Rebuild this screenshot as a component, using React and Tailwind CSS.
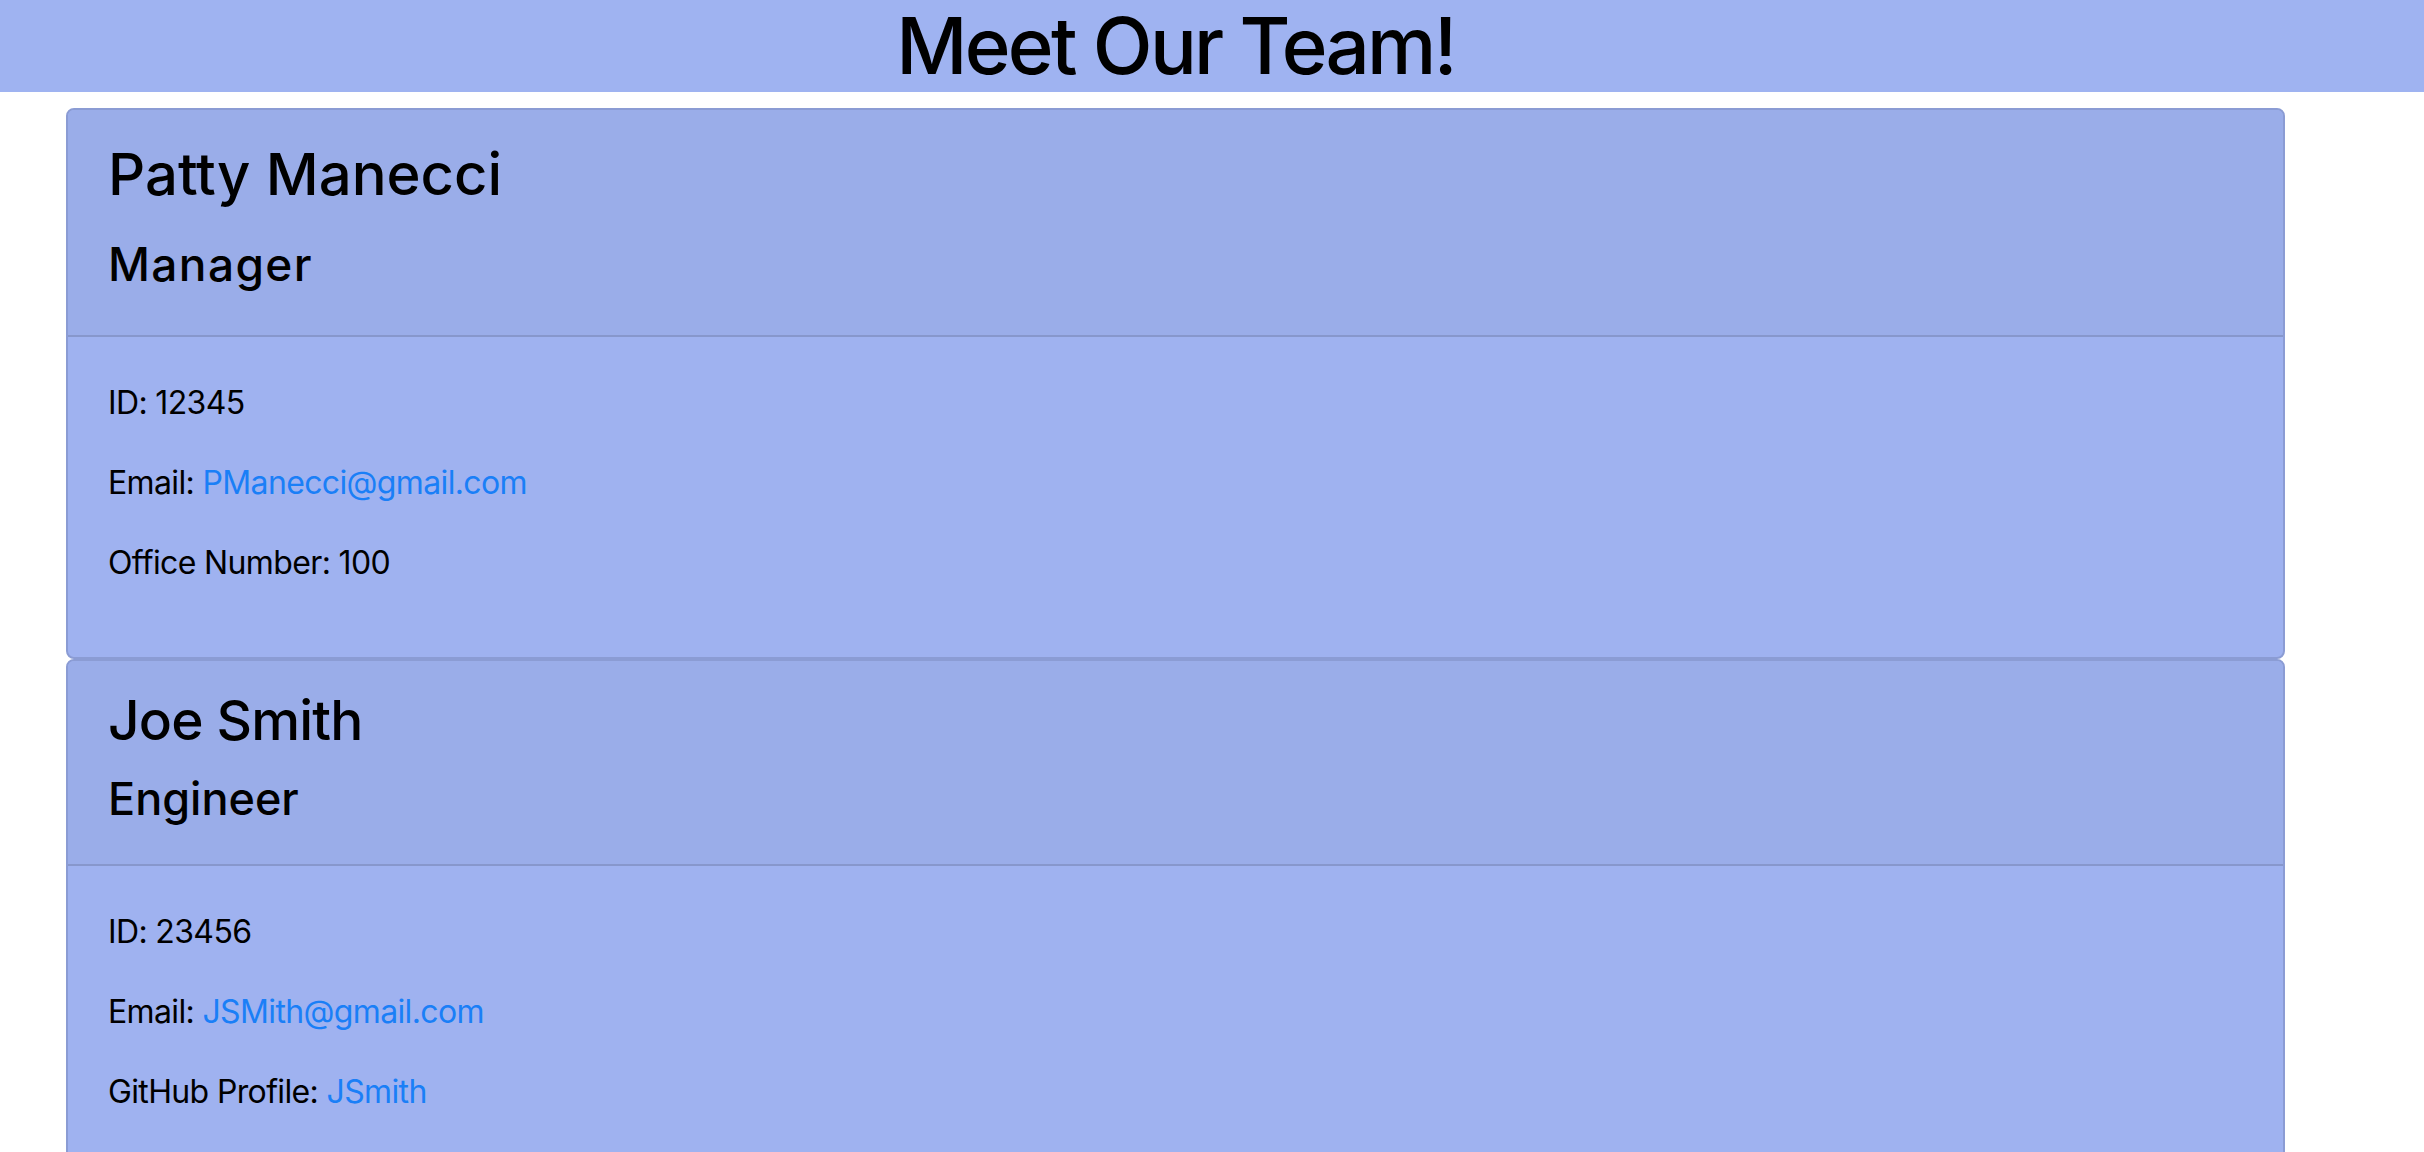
import React from 'react';

const team = [
  {
    id: 1,
    name: "Patty Manecci",
    role: "Manager",
    empId: "12345",
    email: "PManecci@gmail.com",
    extraLabel: "Office Number:",
    extraValue: "100",
    extraIsLink: false,
    headerClass: "pt-[35px] pb-[48px]",
    nameClass: "text-[58px] leading-[58px]",
    roleClass: "mt-[38px] text-[46px] leading-[46px] tracking-[0.03em]",
  },
  {
    id: 2,
    name: "Joe Smith",
    role: "Engineer",
    empId: "23456",
    email: "JSMith@gmail.com",
    extraLabel: "GitHub Profile:",
    extraValue: "JSmith",
    extraIsLink: true,
    headerClass: "pt-[31px] pb-[43px]",
    nameClass: "text-[55px] leading-[56px] tracking-[-0.015em]",
    roleClass: "mt-[28px] text-[45px] leading-[45px]",
  },
];

const TeamCard = ({ member }) => {
  return (
    <div className="bg-[#9fb2f0] border-2 border-[#8b9cd4] rounded-[8px] overflow-hidden">
      <div className={`bg-[#9aade9] border-b-2 border-[#8797cc] px-[40px] ${member.headerClass}`}>
        <h2 className={`${member.nameClass} font-medium text-black`}>{member.name}</h2>
        <h3 className={`${member.roleClass} font-medium text-black`}>{member.role}</h3>
      </div>
      <div className="px-[40px] pt-[49px] pb-[78px] flex flex-col gap-[47px] text-[32px] leading-[33px] tracking-[-0.02em] text-black">
        <p>ID: {member.empId}</p>
        <p>
          Email: <a href={`mailto:${member.email}`} className="text-[#1a7ff7]">{member.email}</a>
        </p>
        <p>
          {member.extraLabel}{" "}
          {member.extraIsLink ? (
            <a href="#" className="text-[#1a7ff7]">{member.extraValue}</a>
          ) : (
            member.extraValue
          )}
        </p>
      </div>
    </div>
  );
};

const App = () => {
  return (
    <div className="min-h-screen bg-white font-['Inter','Liberation_Sans',sans-serif]">
      <div className="h-[92px] bg-[#9fb3f1]">
        <div className="ml-[66px] w-[2219px] text-center">
          <h1 className="text-[78px] leading-[92px] font-medium tracking-[-0.035em] text-black">Meet Our Team!</h1>
        </div>
      </div>
      <div className="ml-[66px] w-[2219px] mt-[16px] flex flex-col">
        {team.map(member => (
          <TeamCard key={member.id} member={member} />
        ))}
      </div>
    </div>
  );
};

export default App;
